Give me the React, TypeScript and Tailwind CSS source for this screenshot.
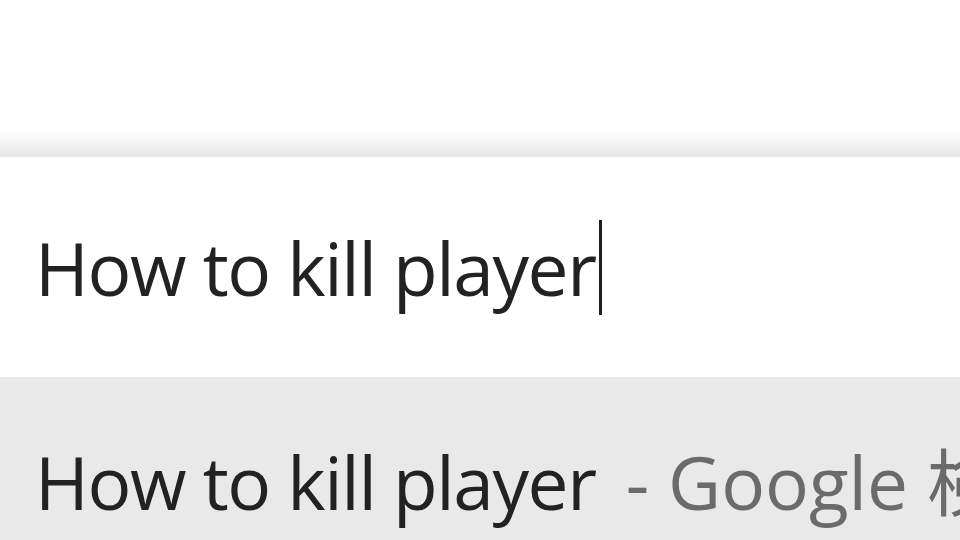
export default function App() {
  return (
    <div className="w-[960px] h-[540px] overflow-hidden bg-white flex flex-col font-['Open_Sans','Noto_Sans_CJK_JP',sans-serif]">
      <div className="h-[128px] bg-white"></div>
      <div className="h-[29px] bg-gradient-to-b from-[#ffffff] via-[#f4f4f4] to-[#e6e6e6]"></div>
      <div className="h-[220px] bg-white flex items-center pl-[35px]">
        <span className="text-[73px] leading-none text-[#222222] tracking-[-1.4px]">How to kill player</span>
        <span className="w-[3px] h-[95px] bg-[#1f1f1f] ml-[3px]"></span>
      </div>
      <div className="flex-1 bg-[#e9e9e9] flex items-center pl-[35px] pt-[46px] whitespace-nowrap">
        <span className="text-[73px] leading-none text-[#222222] tracking-[-1.4px]">How to kill player</span>
        <span className="text-[73px] leading-none text-[#6b6b6b] tracking-[0px] ml-[30px]">- Google 検索</span>
      </div>
    </div>
  );
}
